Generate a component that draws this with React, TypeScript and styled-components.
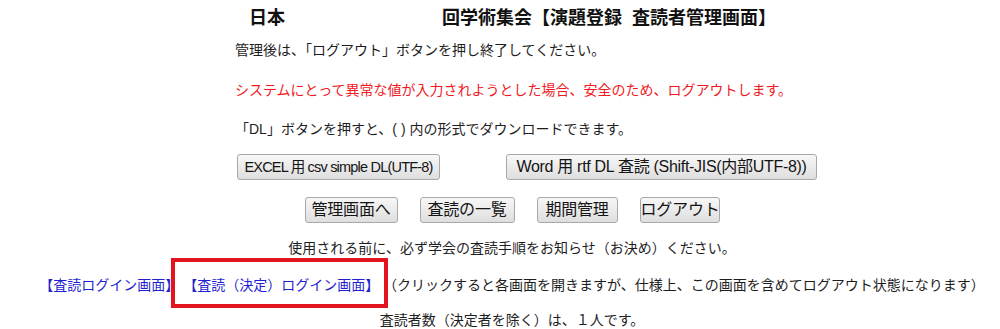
import React from 'react';
import styled, { createGlobalStyle } from 'styled-components';

const GlobalStyle = createGlobalStyle`
  body {
    margin: 0;
    background: #ffffff;
    color: #1e1e1e;
    font-family: "Liberation Sans", "Noto Sans CJK JP", sans-serif;
    font-size: 14px;
  }
`;

const Page = styled.div`
  padding-left: 24px;
  height: 329px;
  overflow: hidden;
`;

const Block = styled.div`
  width: 554px;
  margin: 0 auto;
`;

const Title = styled.h1`
  display: flex;
  margin: 6px 0 0;
  padding-left: 14px;
  font-size: 18px;
  line-height: 24px;
  font-weight: bold;
  color: #111;
  white-space: nowrap;
`;

const Masked = styled.span`
  width: 157px;
`;

const Line = styled.p<{ $gap: number; $tone?: 'red' }>`
  margin: ${(p) => p.$gap}px 0 0;
  line-height: 20px;
  white-space: nowrap;
  color: ${(p) => (p.$tone === 'red' ? '#f01a1f' : '#1e1e1e')};
`;

const CenterLine = styled(Line)`
  text-align: center;
`;

const ButtonRow = styled.div<{ $gap: number; $center?: boolean }>`
  display: flex;
  justify-content: ${(p) => (p.$center ? 'center' : 'flex-start')};
  gap: ${(p) => (p.$center ? 22 : 66)}px;
  margin-top: ${(p) => p.$gap}px;
  padding-left: ${(p) => (p.$center ? 0 : 2)}px;
`;

const Button = styled.button<{ $w: number; $size?: number; $tight?: number }>`
  flex-shrink: 0;
  width: ${(p) => p.$w}px;
  height: 26px;
  padding: 0;
  border: 1px solid #a8a8a8;
  border-radius: 3px;
  background: linear-gradient(#f7f7f7, #dedede);
  color: #151515;
  font-family: "Liberation Sans", "Noto Sans CJK JP", sans-serif;
  font-size: ${(p) => p.$size ?? 16}px;
  letter-spacing: ${(p) => -(p.$tight ?? 0.2)}px;
  line-height: 24px;
  white-space: nowrap;
  cursor: pointer;
`;

const LoginLink = styled.a<{ $marked?: boolean }>`
  position: relative;
  color: #1f1fcf;
  text-decoration: none;

  ${(p) =>
    p.$marked &&
    `
    &::after {
      content: '';
      position: absolute;
      top: -19px;
      bottom: -15px;
      left: -12px;
      right: -9px;
      border: 4px solid #e3141d;
      pointer-events: none;
    }
  `}
`;

export default function App() {
  return (
    <Page>
      <GlobalStyle />
      <Block>
        <Title>
          日本
          <Masked />
          回学術集会【演題登録&nbsp;&nbsp;査読者管理画面】
        </Title>
        <Line $gap={10}>管理後は、「ログアウト」ボタンを押し終了してください。</Line>
        <Line $gap={20} $tone="red">
          システムにとって異常な値が入力されようとした場合、安全のため、ログアウトします。
        </Line>
        <Line $gap={19}>「DL」ボタンを押すと、( ) 内の形式でダウンロードできます。</Line>
        <ButtonRow $gap={15}>
          <Button $w={203} $size={14.5} $tight={0.8}>
            EXCEL 用 csv simple DL(UTF-8)
          </Button>
          <Button $w={311} $size={16} $tight={0.3}>
            Word 用 rtf DL 査読 (Shift-JIS(内部UTF-8))
          </Button>
        </ButtonRow>
      </Block>
      <ButtonRow $gap={17} $center>
        <Button $w={93}>管理画面へ</Button>
        <Button $w={95}>査読の一覧</Button>
        <Button $w={81}>期間管理</Button>
        <Button $w={80}>ログアウト</Button>
      </ButtonRow>
      <CenterLine $gap={15}>使用される前に、必ず学会の査読手順をお知らせ（お決め）ください。</CenterLine>
      <CenterLine $gap={17}>
        <LoginLink href="#">【査読ログイン画面】</LoginLink>{' '}
        <LoginLink href="#" $marked>
          【査読（決定）ログイン画面】
        </LoginLink>{' '}
        （クリックすると各画面を開きますが、仕様上、この画面を含めてログアウト状態になります）
      </CenterLine>
      <CenterLine $gap={15}>査読者数（決定者を除く）は、１人です。</CenterLine>
    </Page>
  );
}
